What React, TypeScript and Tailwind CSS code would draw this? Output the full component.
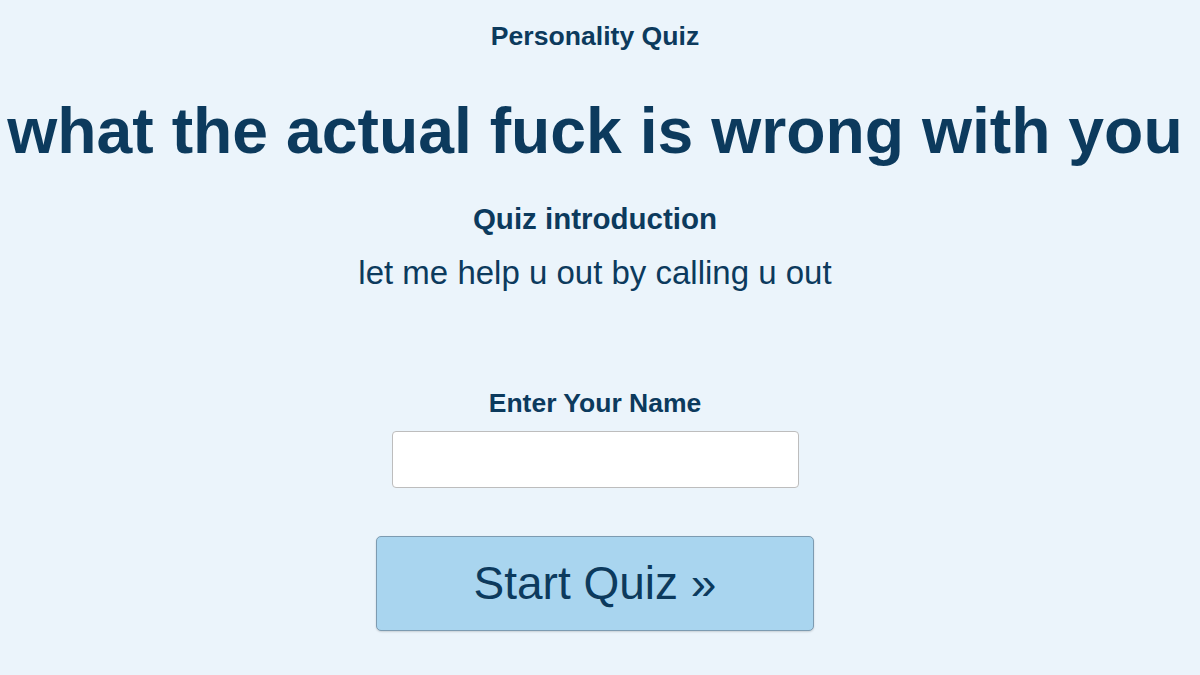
export default function App() {
  return (
    <div
      className="w-[1200px] h-[675px] pr-[10px] bg-[#ebf4fb] text-[#0c3a5d] flex flex-col items-center overflow-hidden"
      style={{ fontFamily: '"Liberation Sans", Arial, sans-serif' }}
    >
      <h2 className="mt-[20px] text-[26.6px] leading-[32px] font-bold">Personality Quiz</h2>
      <h1 className="mt-[42px] text-[64.3px] leading-[74px] font-bold whitespace-nowrap">
        what the actual fuck is wrong with you
      </h1>
      <h3 className="mt-[34px] text-[29.5px] leading-[34px] font-bold">Quiz introduction</h3>
      <p className="mt-[18px] text-[33px] leading-[38px]">let me help u out by calling u out</p>
      <label className="mt-[95px] text-[26.5px] leading-[32px] font-bold">Enter Your Name</label>
      <input
        type="text"
        className="mt-[12px] w-[407px] h-[57px] bg-white border border-[#bdbdbd] rounded-[4px] outline-none px-3 text-[24px]"
      />
      <button className="mt-[48px] w-[438px] h-[95px] bg-[#a9d5ef] border border-[#7d9bb1] rounded-[5px] text-[46px] text-[#0c3a5d] shadow-[0_1px_2px_rgba(0,0,0,0.15)]">
        Start Quiz »
      </button>
    </div>
  );
}
